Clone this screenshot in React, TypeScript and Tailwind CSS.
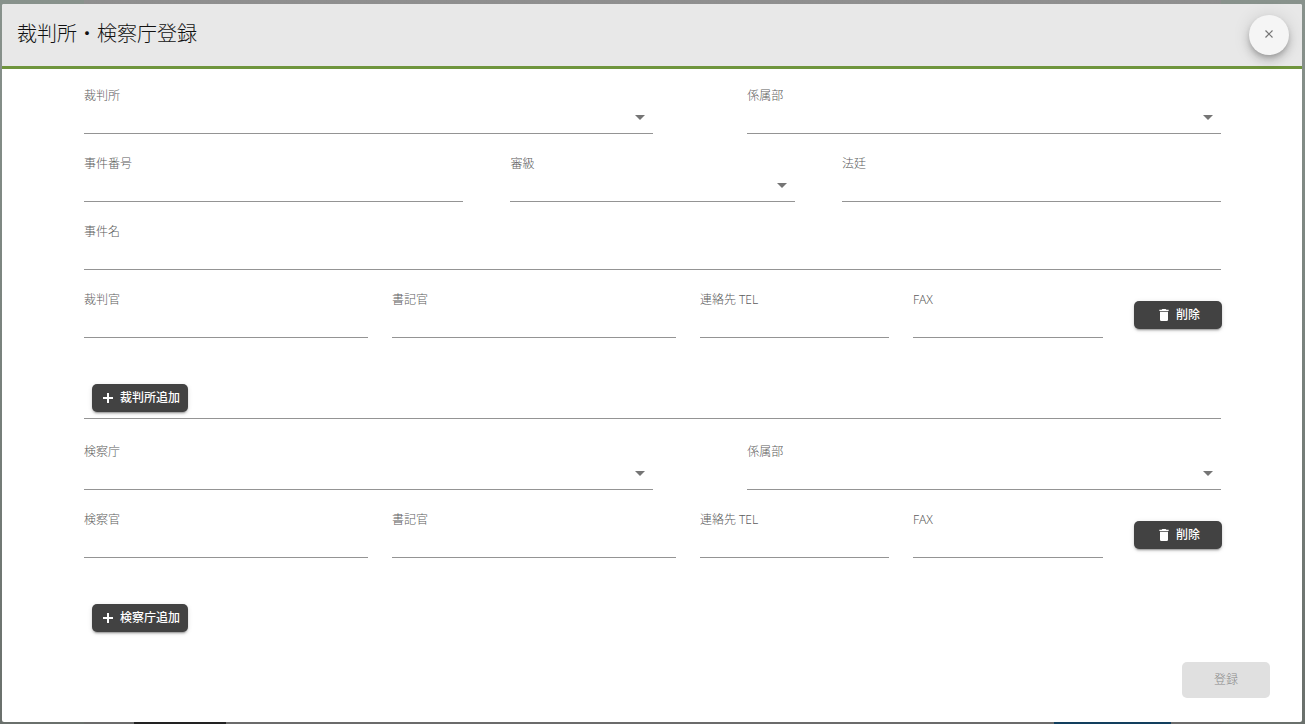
import { useId } from "react";
import type { ReactNode } from "react";

type FieldProps = { label: string; className: string };

function TextField({ label, className }: FieldProps) {
  const id = useId();
  return (
    <div className={`flex flex-col ${className}`}>
      <label htmlFor={id} className="text-xs leading-[18px] font-light text-[#5c5c5c]">
        {label}
      </label>
      <input
        id={id}
        type="text"
        className="h-[29px] w-full border-b border-[#949494] bg-transparent text-sm text-[#333333] outline-none focus:border-[#6f953d]"
      />
    </div>
  );
}

function SelectField({ label, className }: FieldProps) {
  const id = useId();
  return (
    <div className={`flex flex-col ${className}`}>
      <label htmlFor={id} className="text-xs leading-[18px] font-light text-[#5c5c5c]">
        {label}
      </label>
      <div className="relative">
        <select
          id={id}
          defaultValue=""
          className="block h-[29px] w-full appearance-none border-b border-[#949494] bg-transparent pr-6 text-sm text-[#333333] outline-none focus:border-[#6f953d]"
        >
          <option value="" />
        </select>
        <svg
          viewBox="0 0 10 5"
          aria-hidden="true"
          className="pointer-events-none absolute top-[10px] right-2 h-[5px] w-[10px]"
        >
          <path d="M0 0h10L5 5z" fill="#757575" />
        </svg>
      </div>
    </div>
  );
}

function FieldRow({ children }: { children: ReactNode }) {
  return <div className="grid grid-cols-48">{children}</div>;
}

const darkButton =
  "flex h-7 items-center justify-center rounded-[5px] bg-[#424242] text-xs font-medium text-white shadow-[0_3px_1px_-2px_rgba(0,0,0,0.2),0_2px_2px_0_rgba(0,0,0,0.14),0_1px_5px_0_rgba(0,0,0,0.12)]";

function AddButton({ children }: { children: ReactNode }) {
  return (
    <button type="button" className={`${darkButton} ml-2 w-24 gap-1`}>
      <svg viewBox="0 0 16 16" aria-hidden="true" className="size-4 shrink-0 fill-current">
        <path d="M7 3h2v4h4v2H9v4H7V9H3V7h4z" />
      </svg>
      {children}
    </button>
  );
}

function DeleteButton() {
  return (
    <button type="button" className={`${darkButton} mt-[10px] -mr-px w-[88px] gap-1 justify-self-end col-span-5 col-start-44`}>
      <svg viewBox="0 0 24 24" aria-hidden="true" className="size-4 fill-current">
        <path d="M19 4h-3.5l-1-1h-5l-1 1H5v2h14M6 19a2 2 0 0 0 2 2h8a2 2 0 0 0 2-2V7H6z" />
      </svg>
      削除
    </button>
  );
}

function ContactRow({ officer }: { officer: string }) {
  return (
    <FieldRow>
      <TextField label={officer} className="col-span-12" />
      <TextField label="書記官" className="col-span-12 col-start-14" />
      <TextField label="連絡先 TEL" className="col-span-8 col-start-27" />
      <TextField label="FAX" className="col-span-8 col-start-36" />
      <DeleteButton />
    </FieldRow>
  );
}

function Backdrop() {
  return (
    <div aria-hidden="true" className="absolute inset-0 -z-10 flex bg-linear-to-b from-[#88928c] via-[#79827d] to-[#6a706c]">
      <div className="w-[84px]" />
      <div className="flex flex-1 items-end justify-between bg-linear-to-b from-[#8f8f8f] to-[#6b6b6b] px-[50px]">
        <div className="h-[2px] w-[92px] bg-[#222222]" />
        <div className="h-[2px] w-[117px] bg-[#123f5e]" />
      </div>
      <div className="w-[84px]" />
    </div>
  );
}

export default function App() {
  return (
    <div className="relative isolate flex min-h-screen flex-col pt-1 pr-[3px] pb-[2px] pl-[2px] font-['Noto_Sans','Noto_Sans_CJK_JP',sans-serif]">
      <Backdrop />
      <div
        role="dialog"
        aria-labelledby="dialog-title"
        className="flex flex-1 flex-col rounded-[2px] bg-white"
      >
        <header className="flex h-[65px] items-start justify-between rounded-t-[2px] border-b-3 border-[#6f953d] bg-[#e8e8e8] pr-[13px] pl-[15px]">
          <h1 id="dialog-title" className="pt-[14px] text-xl leading-8 font-light text-[#111111]">
            裁判所・検察庁登録
          </h1>
          <button
            type="button"
            aria-label="閉じる"
            className="mt-[11px] flex size-10 items-center justify-center rounded-full bg-[#f5f5f5] pb-[2px] shadow-[0_3px_5px_-1px_rgba(0,0,0,0.2),0_6px_10px_0_rgba(0,0,0,0.14),0_1px_18px_0_rgba(0,0,0,0.12)]"
          >
            <svg viewBox="0 0 8 8" aria-hidden="true" className="size-2">
              <path d="M.5.5l7 7M7.5.5l-7 7" stroke="#757575" strokeWidth="1.2" fill="none" />
            </svg>
          </button>
        </header>

        <form className="flex flex-1 flex-col justify-between gap-[30px] pb-6" onSubmit={(e) => e.preventDefault()}>
          <div className="pt-[18px] pr-[81px] pl-[82px]">
            <section className="flex flex-col gap-[21px]">
              <FieldRow>
                <SelectField label="裁判所" className="col-span-24" />
                <SelectField label="係属部" className="col-span-20 col-start-29" />
              </FieldRow>
              <FieldRow>
                <TextField label="事件番号" className="col-span-16" />
                <SelectField label="審級" className="col-span-12 col-start-19" />
                <TextField label="法廷" className="col-span-16 col-start-33" />
              </FieldRow>
              <FieldRow>
                <TextField label="事件名" className="col-span-48" />
              </FieldRow>
              <ContactRow officer="裁判官" />
            </section>
            <div className="pt-[46px]">
              <AddButton>裁判所追加</AddButton>
            </div>
            <hr className="mt-[6px] mb-6 border-t border-[#949494]" />
            <section className="flex flex-col gap-[21px]">
              <FieldRow>
                <SelectField label="検察庁" className="col-span-24" />
                <SelectField label="係属部" className="col-span-20 col-start-29" />
              </FieldRow>
              <ContactRow officer="検察官" />
            </section>
            <div className="pt-[46px]">
              <AddButton>検察庁追加</AddButton>
            </div>
          </div>
          <div className="flex justify-end pr-8">
            <button
              type="submit"
              disabled
              className="h-9 w-[88px] rounded-[5px] bg-[#e0e0e0] text-xs font-light text-[#8a8a8a]"
            >
              登録
            </button>
          </div>
        </form>
      </div>
    </div>
  );
}
